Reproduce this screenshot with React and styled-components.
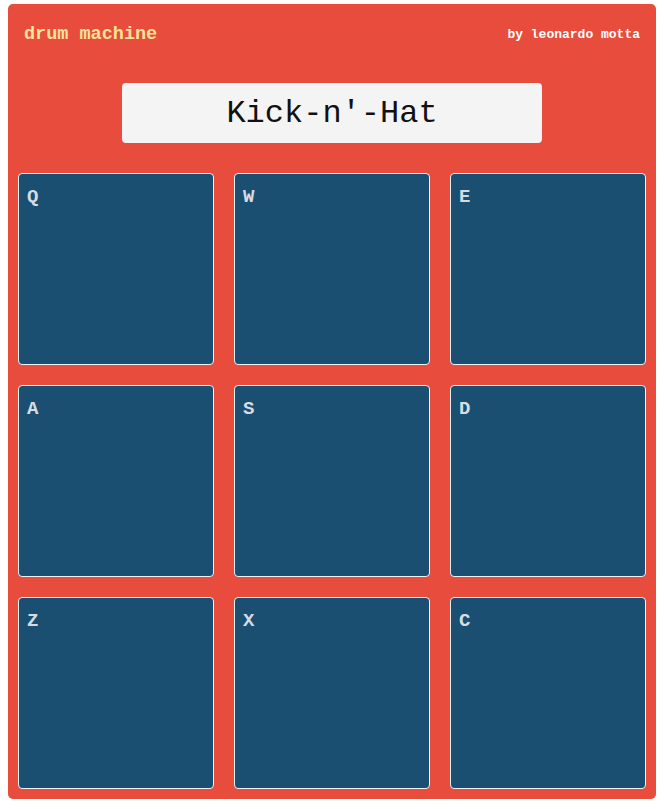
import React from 'react';
import styled, {createGlobalStyle} from 'styled-components';

const GlobalStyle = createGlobalStyle`
  body {
    margin: 4px 8px 8px;
    background: #ffffff;
    font-family: 'Liberation Mono', 'Courier New', monospace;
  }
`;

const Machine = styled.div`
  background: #e74c3c;
  border-radius: 5px;
  padding: 10px;
  height: 795px;
  box-sizing: border-box;
  display: flex;
  flex-direction: column;
`;

const Header = styled.header`
  display: flex;
  justify-content: space-between;
  align-items: center;
  height: 40px;
  padding: 0 6px;
`;

const Title = styled.h1`
  margin: 0;
  font-size: 18.5px;
  font-weight: bold;
  color: #fbe39a;
`;

const Author = styled.span`
  font-size: 13px;
  font-weight: bold;
  color: #ffffff;
`;

const Display = styled.div`
  width: 420px;
  height: 60px;
  margin: 29px auto 30px;
  background: #f4f4f4;
  border-radius: 4px;
  display: flex;
  align-items: center;
  justify-content: center;
  font-size: 32px;
  color: #111111;
`;

const PadGrid = styled.div`
  display: grid;
  grid-template-columns: repeat(3, 196px);
  grid-auto-rows: 192px;
  column-gap: 20px;
  row-gap: 20px;
`;

const Pad = styled.button`
  background: #1b4f72;
  border: 1px solid #f2f2f2;
  border-radius: 4px;
  padding: 12px 8px;
  display: flex;
  align-items: flex-start;
  justify-content: flex-start;
  font-family: 'Liberation Mono', 'Courier New', monospace;
  font-size: 19px;
  font-weight: bold;
  color: #d6dde2;
  cursor: pointer;
`;

const keys = ['Q', 'W', 'E', 'A', 'S', 'D', 'Z', 'X', 'C'];

const App = () => {
  return (
    <>
      <GlobalStyle/>
      <Machine>
        <Header>
          <Title>drum machine</Title>
          <Author>by leonardo motta</Author>
        </Header>
        <Display>Kick-n'-Hat</Display>
        <PadGrid>
          {keys.map(k => (
            <Pad key={k}>{k}</Pad>
          ))}
        </PadGrid>
      </Machine>
    </>
  );
};

export default App;
